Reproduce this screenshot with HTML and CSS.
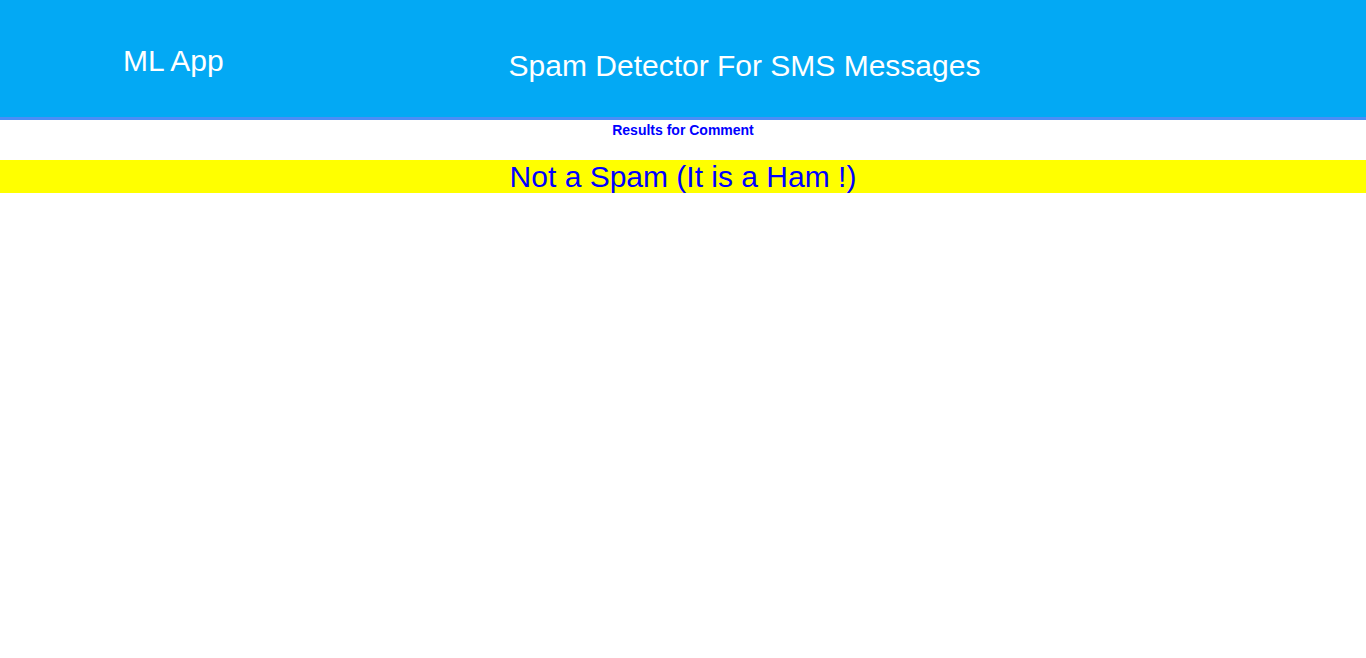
FILE: index.html
```html
<!DOCTYPE html>
<html>
<head>
<meta charset="utf-8">
<title>ML App</title>
<link rel="stylesheet" href="styles.css">
</head>
<body>
<header class="site-header">
  <div class="logo">ML App</div>
  <h1 class="title">Spam Detector For SMS Messages</h1>
</header>
<main class="results">
  <p class="results-label">Results for Comment</p>
  <div class="verdict">Not a Spam (It is a Ham !)</div>
</main>
</body>
</html>
```
FILE: styles.css
```css
html, body {
  margin: 0;
  padding: 0;
  background: #ffffff;
  font-family: "Liberation Sans", Arial, sans-serif;
}

.site-header {
  display: flex;
  align-items: flex-start;
  height: 117px;
  padding: 0 103px 0 123px;
  background: #03a9f4;
  border-bottom: 3px solid #4a8ef6;
  color: #ffffff;
}

.logo {
  width: 103px;
  margin-top: 44px;
  font-size: 30px;
  line-height: 34px;
  white-space: nowrap;
}

.title {
  flex: 1;
  margin: 49px 0 0;
  font-size: 30px;
  font-weight: normal;
  line-height: 34px;
  text-align: center;
}

.results {
  text-align: center;
  color: #0000ff;
}

.results-label {
  margin: 0 0 22px;
  padding-top: 3px;
  font-size: 14px;
  font-weight: bold;
  line-height: 15px;
}

.verdict {
  background: #ffff00;
  height: 33px;
  font-size: 30px;
  line-height: 33px;
}
```
